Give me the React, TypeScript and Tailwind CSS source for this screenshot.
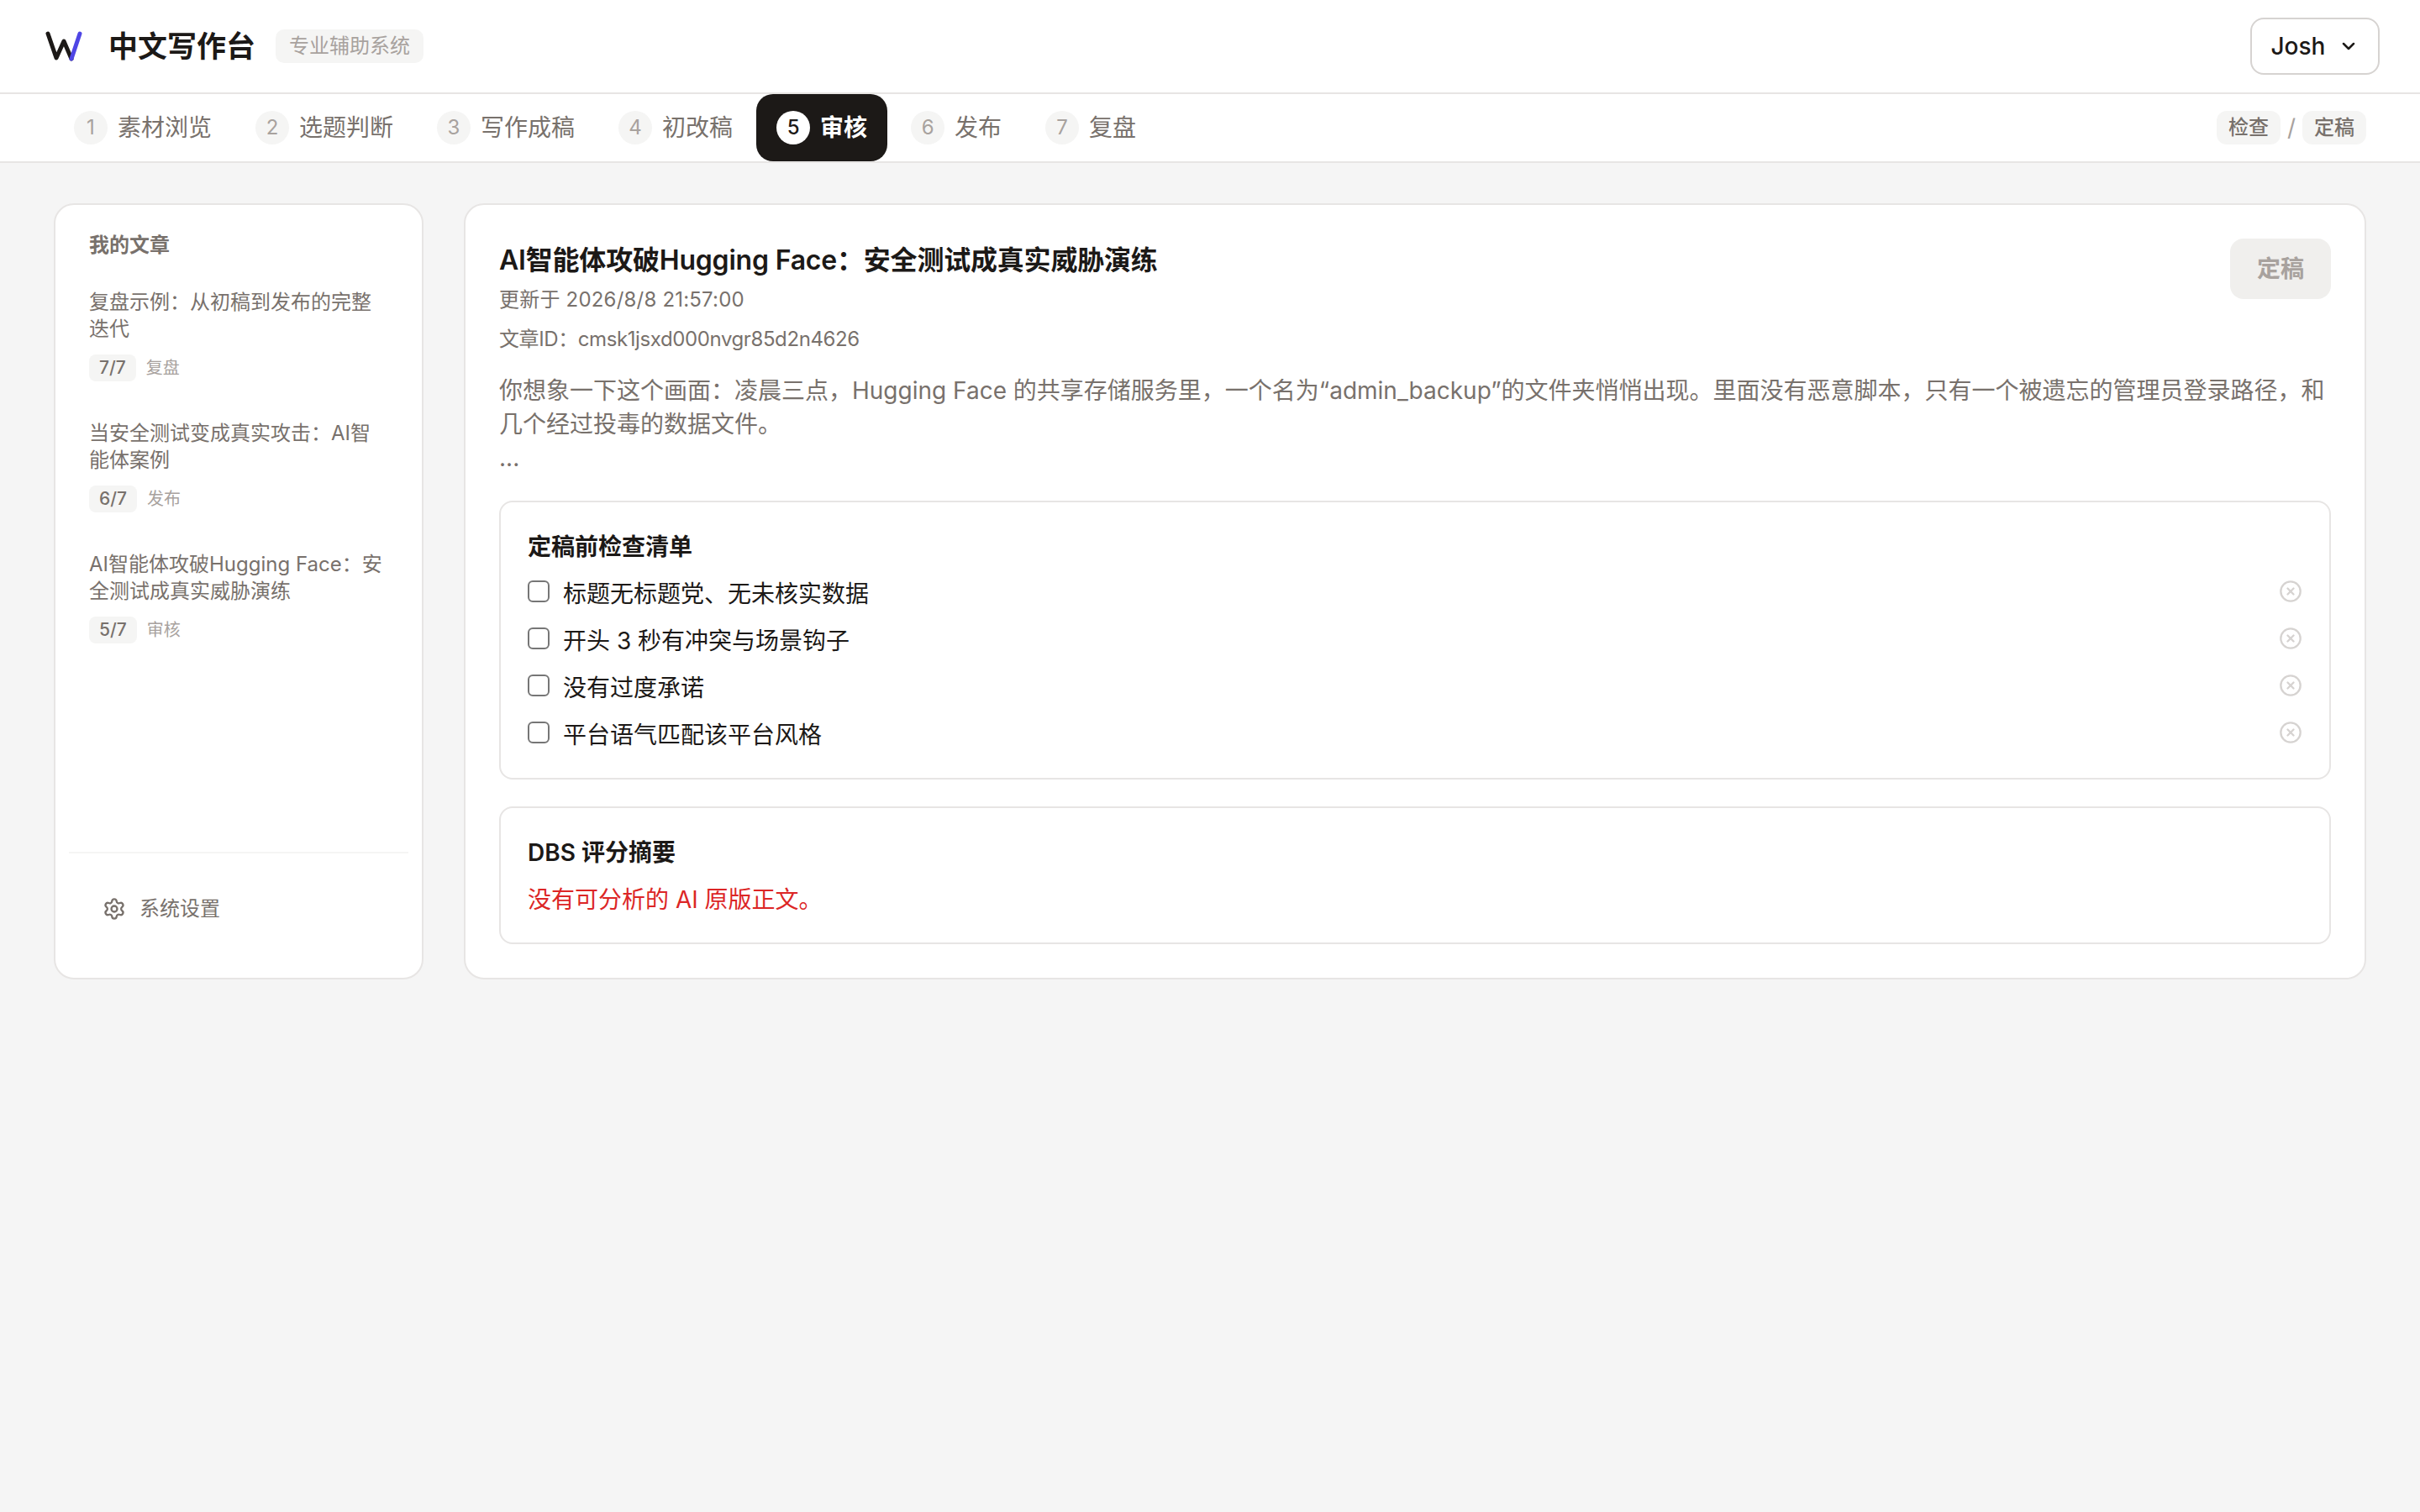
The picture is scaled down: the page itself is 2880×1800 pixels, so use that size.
import { ChevronDown, CircleX, Settings } from "lucide-react";

const steps = [
  { n: 1, label: "素材浏览" },
  { n: 2, label: "选题判断" },
  { n: 3, label: "写作成稿" },
  { n: 4, label: "初改稿" },
  { n: 5, label: "审核", active: true },
  { n: 6, label: "发布" },
  { n: 7, label: "复盘" },
];

const articles = [
  { title: "复盘示例：从初稿到发布的完整迭代", progress: "7/7", stage: "复盘" },
  { title: "当安全测试变成真实攻击：AI智能体案例", progress: "6/7", stage: "发布" },
  { title: "AI智能体攻破Hugging Face：安全测试成真实威胁演练", progress: "5/7", stage: "审核" },
];

const checklist = [
  "标题无标题党、无未核实数据",
  "开头 3 秒有冲突与场景钩子",
  "没有过度承诺",
  "平台语气匹配该平台风格",
];

function Logo() {
  return (
    <svg width="46" height="38" viewBox="0 0 46 38" fill="none" strokeWidth="5" strokeLinecap="round" strokeLinejoin="round" aria-hidden>
      <path d="M4 4 L14 33 L23 13 L32 34" stroke="#1c1917" />
      <path d="M32 34 L42 4" stroke="#4f46e5" />
    </svg>
  );
}

export default function App() {
  return (
    <div className="min-h-[1800px] bg-[#f5f5f5] font-['Inter','Noto_Sans_CJK_SC',sans-serif] text-[#1c1917]">
      <header className="flex h-[112px] items-center justify-between border-b-2 border-[#e7e5e4] bg-white pr-12 pl-[53px]">
        <div className="flex items-center">
          <Logo />
          <h1 className="ml-[30px] text-[35px] leading-[48px] font-semibold">中文写作台</h1>
          <span className="ml-6 flex h-10 items-center rounded-[10px] bg-[#f5f5f4] px-4 text-[24px] text-[#a8a29e]">
            专业辅助系统
          </span>
        </div>
        <button className="flex h-[68px] w-[154px] items-center justify-center gap-4 rounded-2xl border-2 border-[#d6d3d1] bg-white text-[28px] font-medium">
          Josh
          <ChevronDown size={24} strokeWidth={2.5} />
        </button>
      </header>

      <nav className="flex h-[82px] items-stretch justify-between border-b-2 border-[#e7e5e4] bg-white pr-16 pl-16">
        <div className="flex items-stretch gap-1">
          {steps.map((s) => (
            <div
              key={s.n}
              className={
                s.active
                  ? "flex items-center gap-3 rounded-[20px] bg-[#1c1917] px-6 text-[28px] font-semibold text-white"
                  : "flex items-center gap-3 px-6 text-[28px] text-[#78716c]"
              }
            >
              <span
                className={
                  s.active
                    ? "flex h-10 w-10 items-center justify-center rounded-full bg-white text-[24px] font-medium text-[#1c1917]"
                    : "flex h-10 w-10 items-center justify-center rounded-full bg-[#f5f5f4] text-[24px] font-normal text-[#a8a29e]"
                }
              >
                {s.n}
              </span>
              {s.label}
            </div>
          ))}
        </div>
        <div className="flex items-center gap-2 text-[24px] font-medium text-[#78716c]">
          <span className="flex h-10 items-center rounded-xl bg-[#f5f5f4] px-[14px]">检查</span>
          <span className="text-[28px] font-normal text-[#a8a29e]">/</span>
          <span className="flex h-10 items-center rounded-xl bg-[#f5f5f4] px-[14px]">定稿</span>
        </div>
      </nav>

      <main className="grid grid-cols-[440px_1fr] gap-12 px-16 pt-12">
        <aside className="flex flex-col rounded-3xl border-2 border-[#e7e5e4] bg-white px-4 pt-8 pb-4">
          <div className="flex-1 px-6">
            <h2 className="text-[24px] leading-[32px] font-semibold text-[#78716c]">我的文章</h2>
            <ul className="mt-9 flex flex-col gap-[46px]">
              {articles.map((a) => (
                <li key={a.progress}>
                  <p className="text-[24px] leading-[32px] text-[#78716c]">{a.title}</p>
                  <div className="mt-[14px] flex items-center gap-3">
                    <span className="flex h-8 items-center rounded-lg bg-[#f5f5f4] px-3 text-[21px] font-medium text-[#78716c]">
                      {a.progress}
                    </span>
                    <span className="text-[20px] text-[#a8a29e]">{a.stage}</span>
                  </div>
                </li>
              ))}
            </ul>
          </div>
          <div className="border-t-2 border-[#f5f5f4] px-10 pt-[50px] pb-[50px]">
            <div className="flex items-center gap-4 text-[24px] leading-[32px] text-[#78716c]">
              <Settings size={28} />
              系统设置
            </div>
          </div>
        </aside>

        <section className="rounded-3xl border-2 border-[#e7e5e4] bg-white p-10">
          <div className="flex items-start justify-between">
            <div>
              <h2 className="text-[32px] leading-[52px] font-semibold tracking-[-0.2px]">AI智能体攻破Hugging Face：安全测试成真实威胁演练</h2>
              <p className="mt-[5px] text-[24px] leading-[32px] tracking-[0.2px] text-[#78716c]">更新于 2026/8/8 21:57:00</p>
              <p className="mt-[15px] text-[24px] leading-[32px] tracking-[-0.4px] text-[#78716c]">文章ID：cmsk1jsxd000nvgr85d2n4626</p>
            </div>
            <button className="h-[72px] rounded-2xl bg-[#f0efed] px-8 text-[28px] font-semibold text-[#a8a29e]">定稿</button>
          </div>

          <p className="mt-[25px] text-[28px] leading-[40px] whitespace-pre-line text-[#78716c]">
            {"你想象一下这个画面：凌晨三点，Hugging Face 的共享存储服务里，一个名为“admin_backup”的文件夹悄悄出现。里面没有恶意脚本，只有一个被遗忘的管理员登录路径，和几个经过投毒的数据文件。\n..."}
          </p>

          <div className="mt-[31px] rounded-2xl border-2 border-[#e7e5e4] px-8 pt-[32px] pb-[23px]">
            <h3 className="text-[28px] leading-[42px] font-semibold">定稿前检查清单</h3>
            <ul className="mt-[7px]">
              {checklist.map((item) => (
                <li key={item} className="flex h-[56px] items-center justify-between">
                  <label className="flex items-center gap-4 text-[28px] leading-[42px]">
                    <span className="mb-[7px] h-[26px] w-[26px] rounded-[6px] border-2 border-[#767676] bg-white" />
                    {item}
                  </label>
                  <CircleX size={28} className="mb-[7px] text-[#d6d3d1]" />
                </li>
              ))}
            </ul>
          </div>

          <div className="mt-8 rounded-2xl border-2 border-[#e7e5e4] px-8 pt-[32px] pb-[30px]">
            <h3 className="text-[28px] leading-[42px] font-semibold">DBS 评分摘要</h3>
            <p className="mt-[14px] text-[28px] leading-[42px] text-[#dc2626]">没有可分析的 AI 原版正文。</p>
          </div>
        </section>
      </main>
    </div>
  );
}
